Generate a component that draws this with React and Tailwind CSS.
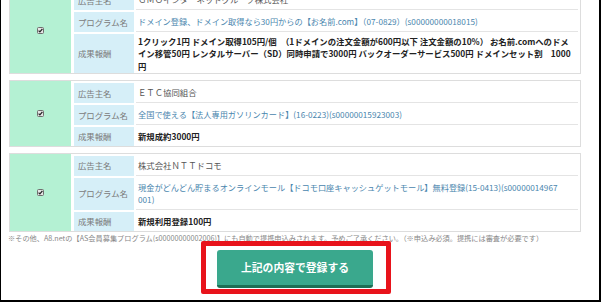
import React from 'react'

const cards = [
  {
    advertiser: 'ＧＭＯインターネットグループ株式会社',
    program: ['ドメイン登録、ドメイン取得なら30円からの【お名前.com】（07-0829）(s00000000018015)'],
    reward: [
      '1クリック1円 ドメイン取得105円/個　（1ドメインの注文金額が600円以下 注文金額の10%） お名前.comへのドメ',
      'イン移管50円 レンタルサーバー（SD）同時申請で3000円 バックオーダーサービス500円 ドメインセット割　1000',
      '円',
    ],
    tight: true,
    first: true,
  },
  {
    advertiser: 'ＥＴＣ協同組合',
    program: ['全国で使える【法人専用ガソリンカード】(16-0223)(s00000015923003)'],
    reward: ['新規成約3000円'],
  },
  {
    advertiser: '株式会社ＮＴＴドコモ',
    program: [
      '現金がどんどん貯まるオンラインモール【ドコモ口座キャッシュゲットモール】無料登録(15-0413)(s00000014967',
      '001)',
    ],
    reward: ['新規利用登録100円'],
  },
]

const CheckMark = () => (
  <svg width="7" height="7" viewBox="0 0 7 7">
    <rect x="0.5" y="0.5" width="6" height="6" rx="1" fill="#e6e6e6" stroke="#6f6f6f" />
    <path d="M1.6 3.6 L2.9 4.9 L5.4 1.9" fill="none" stroke="#222" strokeWidth="1.3" />
  </svg>
)

const Lines = ({ lines }) => (
  <div>
    {lines.map((l, i) => (
      <div key={i} className="whitespace-nowrap">
        {l}
      </div>
    ))}
  </div>
)

const Row = ({ label, children, last, valueClass }) => (
  <div className="flex gap-x-[2px]">
    <div className="w-[60px] shrink-0 bg-[#d6eff8] text-[#7a7a7a] pl-[4px] py-[3.25px] flex items-center">
      {label}
    </div>
    <div className={`flex-1 min-w-0 pl-[2px] flex items-center ${last ? '' : 'border-b border-[#e4e4e4]'} ${valueClass}`}>
      {children}
    </div>
  </div>
)

const Card = ({ card }) => (
  <div className={`flex border border-[#dddddd] ${card.first ? '-mt-[13px]' : ''}`}>
    <div className="w-[61px] shrink-0 bg-[#b4f1d3] flex items-center justify-center">
      <CheckMark />
    </div>
    <div className="flex-1 flex flex-col gap-y-[2px] pl-[3px] pr-[2px] pt-[2px]">
      <Row label="広告主名" valueClass="py-[3.25px] text-[#555]">
        <div className="whitespace-nowrap">{card.advertiser}</div>
      </Row>
      <Row label="プログラム名" valueClass="py-[3px] text-[#4a86ae] text-[8.2px]">
        <Lines lines={card.program} />
      </Row>
      <Row
        label="成果報酬"
        last
        valueClass={`${card.tight ? 'py-[1px]' : 'py-[3.25px]'} font-bold text-[#222]`}
      >
        <Lines lines={card.reward} />
      </Row>
    </div>
  </div>
)

export default function App() {
  return (
    <div className="w-[602px] h-[303px] overflow-hidden bg-white relative">
      <div
        className="w-[601px] h-[302px] overflow-hidden border-l border-r-2 border-b-2 border-black text-[8.4px] leading-[12.5px]"
        style={{ fontFamily: '"Noto Sans CJK JP", "Noto Sans", sans-serif' }}
      >
        <div className="w-[572px] ml-[8px] flex flex-col gap-y-[6px]">
          {cards.map((card, i) => (
            <Card key={i} card={card} />
          ))}
        </div>
        <p className="ml-[7px] mt-[1px] text-[7.2px] leading-[10px] text-[#888] whitespace-nowrap">
          ※その他、A8.netの【AS会員募集プログラム(s00000000002006)】にも自動で提携申込みされます。予めご了承ください。（※申込み必須。提携には審査が必要です）
        </p>
        <div className="w-[572px] ml-[8px] flex justify-center mt-[7px]">
          <button className="w-[156px] h-[38px] rounded-[3px] bg-[#3aa88d] border-b-[3px] border-[#1d6f55] text-white font-bold text-[10.8px]">
            上記の内容で登録する
          </button>
        </div>
      </div>
      <div className="absolute left-[201px] top-[241px] w-[190px] h-[53px] border-[5px] border-[#e8131b] rounded-[2px]" />
    </div>
  )
}
